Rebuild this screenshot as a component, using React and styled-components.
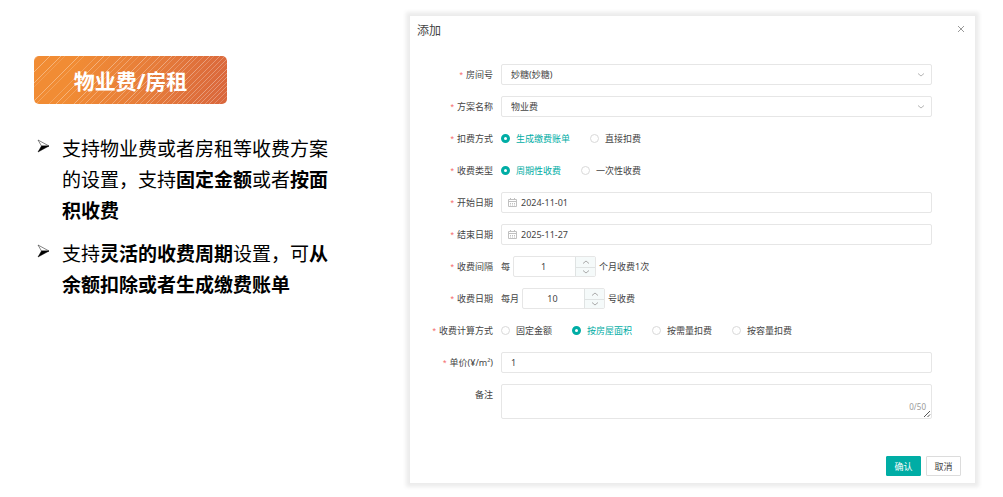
import { useState } from 'react'
import styled, { createGlobalStyle } from 'styled-components'

const stripes = [
  [4, 0.15], [16, 0.35], [27, 0.35], [31, 0.15], [45, 0.35], [50, 0.2],
  [63, 0.2], [70, 0.35], [76, 0.2], [88, 0.35], [93, 0.2], [99, 0.3],
  [105, 0.15], [113, 0.35], [118, 0.2], [126, 0.3], [131, 0.2], [138, 0.35],
  [142, 0.2], [149, 0.3], [154, 0.2], [160, 0.35], [164, 0.25], [170, 0.2],
  [176, 0.35], [180, 0.2], [186, 0.3], [191, 0.25], [196, 0.3], [200, 0.2],
  [206, 0.35], [210, 0.25], [214, 0.3], [219, 0.25], [223, 0.3], [228, 0.25],
  [233, 0.2],
]

const App = () => (
  <>
    <GlobalStyle />
    <Page>
      <Intro>
        <Badge>
          <Stripes viewBox="0 0 193 48" preserveAspectRatio="none" aria-hidden="true">
            {stripes.map(([x, opacity]) => (
              <line key={x} x1={x} y1="0" x2={x - 48} y2="48" stroke="#fff" strokeOpacity={opacity} />
            ))}
          </Stripes>
          <BadgeText>物业费/房租</BadgeText>
        </Badge>

        <Points>
          <Point>
            <Bullet />
            <span>
              支持物业费或者房租等收费方案的设置，支持<b>固定金额</b>或者
              <b>按面积收费</b>
            </span>
          </Point>
          <Point>
            <Bullet />
            <span>
              支持<b>灵活的收费周期</b>设置，可<b>从余额扣除或者生成缴费账单</b>
            </span>
          </Point>
        </Points>
      </Intro>

      <FeeDialog />
    </Page>
  </>
)

const Bullet = () => (
  <BulletIcon viewBox="0 0 13 14" aria-hidden="true">
    <path d="M1 1 L12 7 L4.5 7 Z" fill="#fff" stroke="#333" strokeWidth="0.6" />
    <path d="M12 7 L1 13 L4.5 7 Z" fill="#000" stroke="#000" strokeWidth="0.5" />
  </BulletIcon>
)

const Chevron = ({ up }) => (
  <svg width="8" height="6" viewBox="0 0 8 6" aria-hidden="true">
    <path d={up ? 'M1 4.5 L4 2 L7 4.5' : 'M1 1.5 L4 4 L7 1.5'} fill="none" stroke="currentColor" />
  </svg>
)

const Calendar = () => (
  <CalendarIcon viewBox="0 0 9 9" aria-hidden="true">
    <path d="M0.5 1.5 H8.5 V8.5 H0.5 Z M0.5 3.5 H8.5 M2.5 0 V2 M6.5 0 V2" />
    <path d="M2 5.5 H7 M2 7 H7" strokeDasharray="1 1" />
  </CalendarIcon>
)

const SelectField = ({ id, value }) => (
  <Control>
    <Select id={id} defaultValue={value}>
      <option>{value}</option>
    </Select>
    <SelectArrow>
      <Chevron />
    </SelectArrow>
  </Control>
)

const DateField = ({ id, value }) => (
  <Control>
    <Calendar />
    <DateInput id={id} type="text" defaultValue={value} />
  </Control>
)

const RadioField = ({ name, label, options, value }) => {
  const [selected, setSelected] = useState(value)

  return (
    <Radios role="radiogroup" aria-label={label}>
      {options.map((option) => (
        <RadioLabel key={option} $checked={option === selected}>
          <Radio
            type="radio"
            name={name}
            checked={option === selected}
            onChange={() => setSelected(option)}
          />
          {option}
        </RadioLabel>
      ))}
    </Radios>
  )
}

const NumberField = ({ id, before, after, value }) => {
  const [count, setCount] = useState(value)

  return (
    <Inline>
      {before}
      <Stepper>
        <StepperInput
          id={id}
          type="text"
          inputMode="numeric"
          value={count}
          onChange={(e) => setCount(Number(e.target.value) || 0)}
        />
        <StepperButtons>
          <StepButton type="button" aria-label="+" onClick={() => setCount(count + 1)}>
            <Chevron up />
          </StepButton>
          <StepButton type="button" aria-label="-" onClick={() => setCount(count - 1)}>
            <Chevron />
          </StepButton>
        </StepperButtons>
      </Stepper>
      {after}
    </Inline>
  )
}

const FeeDialog = () => {
  const [note, setNote] = useState('')

  return (
    <Dialog role="dialog" aria-labelledby="dialog-title">
      <DialogHeader>
        <DialogTitle id="dialog-title">添加</DialogTitle>
        <CloseButton type="button" aria-label="关闭">
          <svg width="8" height="8" viewBox="0 0 8 8" aria-hidden="true">
            <path d="M1 1 L7 7 M7 1 L1 7" stroke="currentColor" />
          </svg>
        </CloseButton>
      </DialogHeader>

      <Form>
        <Label htmlFor="room" $required>房间号</Label>
        <SelectField id="room" value="妙糖(妙糖)" />

        <Label htmlFor="plan" $required>方案名称</Label>
        <SelectField id="plan" value="物业费" />

        <Label as="span" $required>扣费方式</Label>
        <RadioField
          name="method"
          label="扣费方式"
          options={['生成缴费账单', '直接扣费']}
          value="生成缴费账单"
        />

        <Label as="span" $required>收费类型</Label>
        <RadioField
          name="type"
          label="收费类型"
          options={['周期性收费', '一次性收费']}
          value="周期性收费"
        />

        <Label htmlFor="start" $required>开始日期</Label>
        <DateField id="start" value="2024-11-01" />

        <Label htmlFor="end" $required>结束日期</Label>
        <DateField id="end" value="2025-11-27" />

        <Label htmlFor="interval" $required>收费间隔</Label>
        <NumberField id="interval" before="每" after="个月收费1次" value={1} />

        <Label htmlFor="day" $required>收费日期</Label>
        <NumberField id="day" before="每月" after="号收费" value={10} />

        <Label as="span" $required>收费计算方式</Label>
        <RadioField
          name="calc"
          label="收费计算方式"
          options={['固定金额', '按房屋面积', '按需量扣费', '按容量扣费']}
          value="按房屋面积"
        />

        <Label htmlFor="price" $required>单价(¥/m²)</Label>
        <TextInput id="price" type="text" defaultValue="1" />

        <Label htmlFor="note">备注</Label>
        <Control>
          <TextArea id="note" maxLength={50} value={note} onChange={(e) => setNote(e.target.value)} />
          <Counter>{note.length}/50</Counter>
          <Grip viewBox="0 0 8 8" aria-hidden="true">
            <path d="M1 7 L7 1 M4.5 7 L7 4.5" stroke="#555" />
          </Grip>
        </Control>
      </Form>

      <DialogFooter>
        <Button type="button" $primary>确认</Button>
        <Button type="button">取消</Button>
      </DialogFooter>
    </Dialog>
  )
}

const GlobalStyle = createGlobalStyle`
  *,
  *::before,
  *::after {
    box-sizing: border-box;
  }

  body {
    margin: 0;
    background: #fff;
    color: #000;
    font-family: 'Noto Sans', 'Noto Sans CJK SC', sans-serif;
  }

  button,
  input,
  select,
  textarea {
    color: inherit;
    font: inherit;
    margin: 0;
  }
`

const Page = styled.main`
  display: grid;
  grid-template-columns: 296px minmax(0, 1fr);
  align-items: start;
  gap: 80px;
  padding: 16px 28px 14px 34px;
`

const Intro = styled.section`
  padding-top: 40px;
`

const Badge = styled.h1`
  position: relative;
  display: flex;
  align-items: center;
  justify-content: center;
  width: 193px;
  height: 48px;
  margin: 0 0 30px;
  overflow: hidden;
  border-radius: 5px;
  background: linear-gradient(105deg, #f18c34 20%, #e67c3a 60%, #d9663c);
  color: #fff;
  font-size: 21px;
  font-weight: 700;
`

const Stripes = styled.svg`
  position: absolute;
  inset: 0;
  width: 100%;
  height: 100%;
`

const BadgeText = styled.span`
  position: relative;
`

const Points = styled.ul`
  display: grid;
  gap: 12px;
  margin: 0;
  padding: 0;
  list-style: none;
`

const Point = styled.li`
  display: grid;
  grid-template-columns: 28px 1fr;
  font-size: 19px;
  line-height: 31px;
`

const BulletIcon = styled.svg`
  width: 13px;
  height: 14px;
  margin: 5px 0 0 3px;
`

const Dialog = styled.section`
  display: flex;
  flex-direction: column;
  background: #fff;
  box-shadow: 0 0 4px 4px #ececec;
  color: #444;
  font-size: 9px;
  line-height: 13px;
`

const DialogHeader = styled.header`
  display: flex;
  align-items: flex-start;
  justify-content: space-between;
  padding: 6px 10px 0 7px;
`

const DialogTitle = styled.h2`
  margin: 0;
  font-size: 12px;
  font-weight: 400;
  line-height: 18px;
`

const CloseButton = styled.button`
  display: flex;
  padding: 3px 0;
  border: none;
  background: none;
  color: #999;
  cursor: pointer;
`

const Form = styled.form`
  display: grid;
  grid-template-columns: 83px minmax(0, 1fr);
  gap: 11px 8px;
  padding: 24px 43px 0 0;
`

const Label = styled.label`
  line-height: 21px;
  text-align: right;
  white-space: nowrap;

  &::before {
    content: ${({ $required }) => ($required ? "'*'" : 'none')};
    margin-right: 3px;
    color: #f56c6c;
    font-family: 'Liberation Sans', sans-serif;
    line-height: 1;
  }
`

const Control = styled.div`
  position: relative;
`

const TextInput = styled.input`
  display: block;
  width: 100%;
  height: 21px;
  padding: 0 9px;
  border: 1px solid #e6e6e6;
  border-radius: 2px;
  background: #fff;
  outline: none;

  &:focus {
    border-color: #00ada5;
  }
`

const DateInput = styled(TextInput)`
  padding-left: 19px;
`

const Select = styled(TextInput).attrs({ as: 'select' })`
  appearance: none;
`

const SelectArrow = styled.span`
  position: absolute;
  top: 8px;
  right: 7px;
  display: flex;
  color: #b5b5b5;
  pointer-events: none;
`

const CalendarIcon = styled.svg`
  position: absolute;
  top: 6px;
  left: 7px;
  width: 9px;
  height: 9px;
  fill: none;
  stroke: #c0c0c0;
`

const Radios = styled.div`
  display: flex;
  gap: 20px;
  height: 21px;
`

const RadioLabel = styled.label`
  display: flex;
  align-items: center;
  gap: 6px;
  color: ${({ $checked }) => ($checked ? '#00ada5' : 'inherit')};
  white-space: nowrap;
`

const Radio = styled.input`
  width: 9px;
  height: 9px;
  appearance: none;
  border: 1px solid #d9d9d9;
  border-radius: 50%;
  background: #fff;

  &:checked {
    border: 3px solid #00ada5;
  }
`

const Inline = styled.div`
  display: flex;
  align-items: center;
  gap: 3px;
  height: 21px;
`

const Stepper = styled.div`
  display: flex;
  width: 83px;
  height: 21px;
  border: 1px solid #e6e6e6;
  border-radius: 2px;
`

const StepperInput = styled.input`
  flex: 1;
  min-width: 0;
  padding: 0 2px 0 0;
  border: none;
  background: none;
  outline: none;
  text-align: center;
`

const StepperButtons = styled.div`
  display: grid;
  grid-template-rows: 1fr 1fr;
  width: 20px;
  border-left: 1px solid #dfe3e3;
  background: #f5fafa;
`

const StepButton = styled.button`
  display: flex;
  align-items: center;
  justify-content: center;
  min-height: 0;
  padding: 0;
  border: none;
  background: none;
  color: #aaa;
  cursor: pointer;

  & + & {
    border-top: 1px solid #dfe3e3;
  }
`

const TextArea = styled.textarea`
  display: block;
  width: 100%;
  height: 35px;
  padding: 3px 9px;
  border: 1px solid #e6e6e6;
  border-radius: 2px;
  outline: none;
  resize: none;
`

const Counter = styled.span`
  position: absolute;
  right: 6px;
  bottom: 6px;
  color: #999;
  font-size: 8px;
`

const Grip = styled.svg`
  position: absolute;
  right: 1px;
  bottom: 1px;
  width: 8px;
  height: 8px;
`

const DialogFooter = styled.footer`
  display: flex;
  justify-content: flex-end;
  gap: 5px;
  padding: 37px 14px 7px;
`

const Button = styled.button`
  width: 35px;
  height: 20px;
  padding: 0;
  border: 1px solid ${({ $primary }) => ($primary ? '#00ada5' : '#dcdcdc')};
  border-radius: 1px;
  background: ${({ $primary }) => ($primary ? '#00ada5' : '#fff')};
  color: ${({ $primary }) => ($primary ? '#fff' : 'inherit')};
  cursor: pointer;
`

export default App
